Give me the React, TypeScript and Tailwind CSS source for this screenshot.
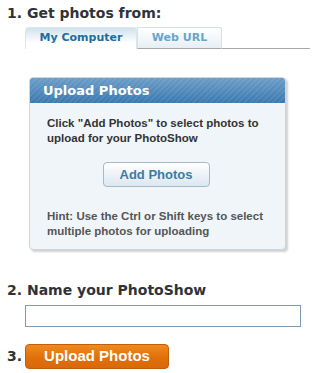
import React from "react";

export default function App() {
  return (
    <div className="w-[314px] h-[373px] bg-white overflow-hidden text-[#2f3338]">
      {/* 1. heading */}
      <div className="pl-[7px] pt-[4px] h-[27px] text-[14px] leading-[18px] font-bold font-['DejaVu_Sans',Verdana,sans-serif] text-[#2f3338]">
        1. Get photos from:
      </div>
      {/* tabs */}
      <div className="flex h-[22px] pl-[25px] pr-[4px] font-['DejaVu_Sans',Verdana,sans-serif]">
        <div className="w-[112px] h-[22px] flex items-center justify-center text-[11px] font-bold text-[#1d6e9c] border border-b-0 border-[#dce6ec] rounded-tl-[4px] rounded-tr-[3px] bg-[linear-gradient(to_bottom,#cfe2ee,#ffffff_70%)]">
          My Computer
        </div>
        <div className="w-[85px] h-[22px] flex items-center justify-center text-[11px] font-bold text-[#65a6cc] border border-[#d6e1e8] border-b-[#a8a8a8] rounded-tr-[3px] bg-[linear-gradient(to_bottom,#ffffff,#e6eff5)]">
          Web URL
        </div>
        <div className="flex-1 border-b border-[#a8a8a8]" />
      </div>
      {/* panel */}
      <div className="ml-[29px] mt-[28px] w-[257px] h-[173px] rounded-[4px] border border-[#cfd6db] shadow-[2px_2px_2px_rgba(0,0,0,0.18)] bg-[#eff5f9] overflow-hidden">
        <div className="h-[25px] flex items-center pl-[13px] text-[13px] font-bold text-white font-['DejaVu_Sans',Verdana,sans-serif] [background:repeating-linear-gradient(135deg,rgba(255,255,255,0.07)_0px,rgba(255,255,255,0.07)_2px,transparent_2px,transparent_4px),linear-gradient(to_bottom,#6b9dc8,#3a78ae)]">
          Upload Photos
        </div>
        <div className="pl-[17px] pr-[12px] pt-[13px] font-['Liberation_Sans',Arial,sans-serif] font-bold">
          <div className="text-[11.5px] leading-[15px] text-[#333]">
            Click "Add Photos" to select photos to upload for your PhotoShow
          </div>
          <div className="flex justify-center mt-[16px] pr-[8px]">
            <div className="w-[107px] h-[25px] rounded-[4px] border border-[#a9b8c2] flex items-center justify-center text-[13px] text-[#3c7ca4] bg-[linear-gradient(to_bottom,#ffffff,#dbe7ef)]">
              Add Photos
            </div>
          </div>
          <div className="mt-[22px] text-[11.5px] leading-[15px] text-[#555]">
            Hint: Use the Ctrl or Shift keys to select multiple photos for uploading
          </div>
        </div>
      </div>
      {/* 2. */}
      <div className="pl-[7px] mt-[31px] text-[14px] leading-[18px] font-bold font-['DejaVu_Sans',Verdana,sans-serif] text-[#2f3338]">
        2. Name your PhotoShow
      </div>
      <div className="pl-[25px] mt-[6px] h-[22px]">
        <input className="block w-[276px] h-[22px] border border-[#7d9bb8] bg-white outline-none" />
      </div>
      {/* 3. */}
      <div className="flex items-end pl-[7px] mt-[17px] font-['Liberation_Sans',Arial,sans-serif] font-bold">
        <div className="w-[18px] text-[14px] leading-[18px] font-['DejaVu_Sans',Verdana,sans-serif] text-[#2f3338] pb-[4px]">3.</div>
        <div className="w-[144px] h-[25px] rounded-[4px] border border-[#c25d0a] flex items-center justify-center text-[15px] text-white bg-[linear-gradient(to_bottom,#f08a1e,#e0700a_55%,#d9680a)]">
          Upload Photos
        </div>
      </div>
    </div>
  );
}
